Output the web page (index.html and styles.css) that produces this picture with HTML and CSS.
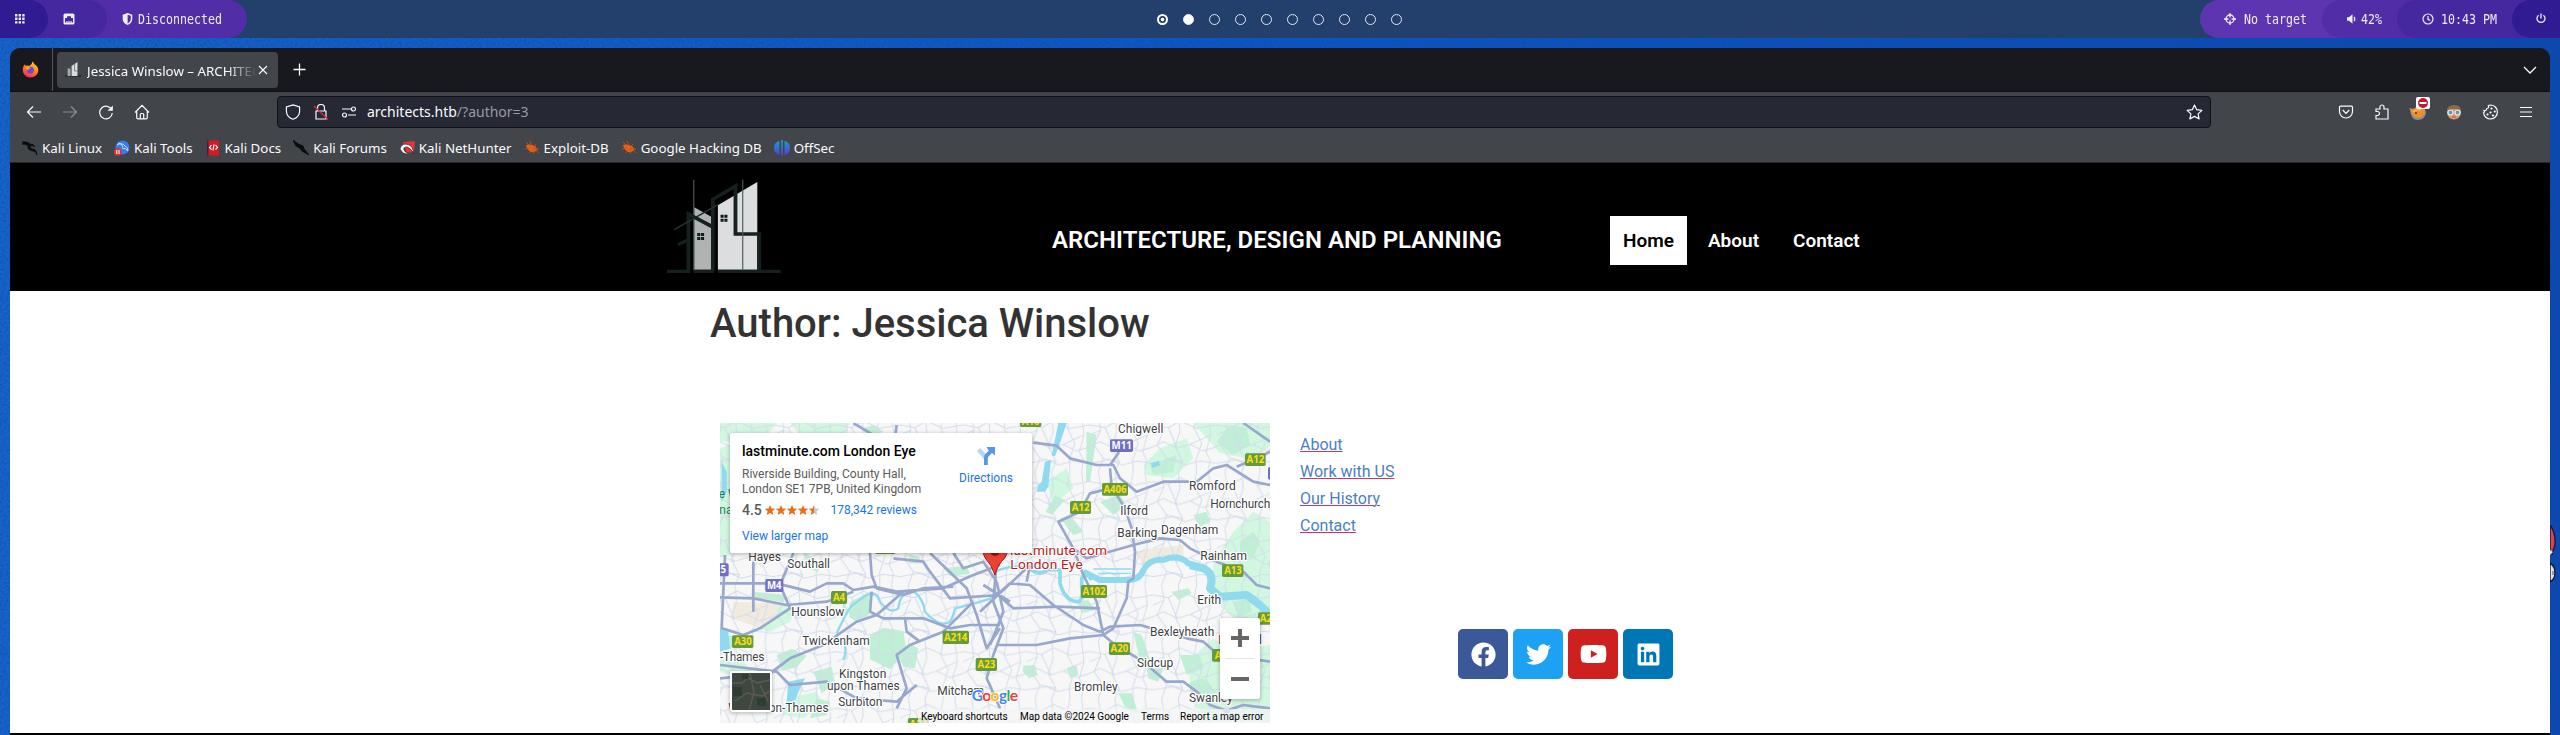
FILE: index.html
```html
<!DOCTYPE html>
<html lang="en">
<head>
<meta charset="utf-8">
<title>Jessica Winslow – ARCHITECTURE</title>
<link rel="stylesheet" href="styles.css">
</head>
<body>
<div class="desktop">
  <svg class="grain" width="2560" height="735"><filter id="noise" x="0" y="0" width="100%" height="100%"><feTurbulence type="fractalNoise" baseFrequency=".45" numOctaves="2"/><feColorMatrix values="0 0 0 0 0  0 0 0 0 .1  0 0 0 0 .3  1.600 0 0 0 -.6"/></filter><rect width="2560" height="735" filter="url(#noise)"/></svg>
  <div class="panel">
    <div class="panel-left">
      <div class="seg seg-apps"><svg width="10" height="10" viewBox="0 0 10 10" fill="#eee"><path d="M0 0h2.400v2.400H0zM3.600 0H6v2.400H3.600zM7.200 0h2.400v2.400H7.200zM0 3.600h2.400V6H0zM3.600 3.600H6V6H3.600zM7.200 3.600h2.400V6H7.200zM0 7.200h2.400v2.400H0zM3.600 7.200H6v2.400H3.600zM7.200 7.200h2.400v2.400H7.200z"/></svg></div>
      <div class="seg seg-net"><svg width="12" height="12" viewBox="0 0 12 12"><rect x=".5" y=".5" width="11" height="11" rx="1.500" fill="#eee"/><path d="M2 9.500V5h2V3.300h4V5h2v4.500H8.600V8H7.500v1.500H6.500V8H5.500v1.500H4.500V8H3.400v1.500z" fill="#4527a0"/></svg></div>
      <div class="seg seg-vpn"><svg width="11" height="12" viewBox="0 0 11 12"><path d="M5.500 0 10.300 1.700V6c0 3-2 5-4.800 6C2.700 11 .7 9 .7 6V1.700z" fill="#eee"/><path d="M5.600 1.700 8.800 2.700V6c0 2-1.200 3.500-3.200 4.400z" fill="#512da8"/></svg><span class="mono">Disconnected</span></div>
    </div>
    <div class="workspaces">
      <i class="dot target"></i><i class="dot full"></i><i class="dot"></i><i class="dot"></i><i class="dot"></i><i class="dot"></i><i class="dot"></i><i class="dot"></i><i class="dot"></i><i class="dot"></i>
    </div>
    <div class="panel-right">
      <div class="seg seg-target"><svg width="12" height="12" viewBox="0 0 12 12" fill="none" stroke="#eee" stroke-width="1.300"><circle cx="6" cy="6" r="4"/><path d="M6 0v4.500M6 7.500V12M0 6h4.500M7.500 6H12"/></svg><span class="mono">No target</span></div>
      <div class="seg seg-vol"><svg width="9" height="10" viewBox="0 0 9 10"><path d="M0 3.200h2L5.500.3v9.400L2 6.800H0z" fill="#eee"/><path d="M7 3q1.500 2 0 4" stroke="#eee" stroke-width="1.300" fill="none"/></svg><span class="mono">42%</span></div>
      <div class="seg seg-time"><svg width="12" height="12" viewBox="0 0 12 12" fill="none" stroke="#eee" stroke-width="1.200"><circle cx="6" cy="6" r="5"/><path d="M6 3v3.300l2.200 1.300"/></svg><span class="mono">10:43 PM</span></div>
      <div class="seg seg-power"><svg width="10" height="11" viewBox="0 0 10 11" fill="none" stroke="#eee" stroke-width="1.300"><path d="M2.600 2.200a4 4 0 1 0 4.800 0M5 .5v5"/></svg></div>
    </div>
  </div>

  <svg class="sticker" viewBox="0 0 10 64"><path d="M0 0q6 8 5 20l-3 9-2-3z" fill="#d94358" stroke="#1b1b3c" stroke-width="1.500"/><path d="M0 25l3 2-3 3z" fill="#dfe6f4"/><path d="M0 38q5 3 5 10 0 6-5 9z" fill="#dfe6f4" stroke="#1b1b3c" stroke-width="1.500"/><path d="M3 46v4" stroke="#555"/></svg>

  <div class="window">
    <div class="tabbar">
      <div class="ff"><svg width="17" height="17" viewBox="0 0 17 17"><defs><linearGradient id="ffg" x1=".8" y1="0" x2=".3" y2="1"><stop offset="0" stop-color="#ffe226"/><stop offset=".45" stop-color="#ff8a16"/><stop offset="1" stop-color="#f3265e"/></linearGradient></defs><path d="M10.500.5c1 1.200 1.400 2 2 2.800C15 5 16.500 7 16.300 9.500 16 13.500 12.700 16.500 8.500 16.500S.7 13 .7 9c0-2.300.8-4.300 2.300-5.800L3.600 5C5 4.300 6 4.500 7 5c1-.3 2.800-1.500 3.500-4.500z" fill="url(#ffg)"/><circle cx="8.400" cy="9.200" r="3.400" fill="#7a3fe0"/><path d="M3.500 6.500c2-1.500 4-.8 5.500.7-1.500 0-2.500.8-3 2-1-.5-2-1.500-2.500-2.700z" fill="#ffa51e"/></svg></div>
      <div class="tab"><svg width="16" height="15" viewBox="0 0 16 15"><path d="M0 14h16" stroke="#24282b" stroke-width="1.500"/><path d="M3 6l2.500 1.500V14H3z" fill="#aaa"/><path d="M6.500 4 12.500 0v14h-6z" fill="#d9dadc"/><path d="M2.500 14V6M6 14V4M9.500 2v7H13" fill="none" stroke="#6d7275" stroke-width=".8"/></svg><span class="tab-title">Jessica Winslow – ARCHITECTURE</span><svg class="close" width="10" height="10" viewBox="0 0 10 10" stroke="#fbfbfe" stroke-width="1.100"><path d="M1 1l8 8M9 1 1 9"/></svg></div>
      <svg class="plus" width="13" height="13" viewBox="0 0 13 13" stroke="#fbfbfe" stroke-width="1.300"><path d="M6.500.5v12M.5 6.500h12"/></svg>
      <svg class="chev" width="14" height="8" viewBox="0 0 14 8" fill="none" stroke="#fbfbfe" stroke-width="1.300"><path d="M1 1l6 6 6-6"/></svg>
    </div>
    <div class="navbar">
      <div class="nav-btns">
        <svg width="16" height="16" viewBox="0 0 16 16"><path d="M15 8H1.500M7 2.500 1.500 8 7 13.500"/></svg>
        <svg class="dim" width="16" height="16" viewBox="0 0 16 16"><path d="M1 8h13.500M9 2.500 14.500 8 9 13.500"/></svg>
        <svg width="16" height="16" viewBox="0 0 16 16"><path d="M13.800 6A6.300 6.300 0 1 0 14.300 9"/><path d="M14.800 1.500v5.300H9.500z" fill="#fbfbfe" stroke="none"/></svg>
        <svg width="16" height="16" viewBox="0 0 16 16"><path d="M1 8.500 8 1.300l7 7.200M2.700 7v6.500q0 1.300 1.300 1.300h8q1.300 0 1.300-1.300V7M6.300 14.500v-4q0-1 1-1h1.400q1 0 1 1v4"/></svg>
      </div>
      <div class="urlbar">
        <svg width="16" height="16" viewBox="0 0 16 16"><path d="M8 .9 14.600 3v4c0 4-2.600 6.900-6.600 8.300C4 13.900 1.400 11 1.400 7V3z"/></svg>
        <svg width="16" height="16" viewBox="0 0 16 16"><path d="M4.500 7V4a3.500 3.500 0 0 1 7 0v3M3 7h10v8H3z"/><path d="M1 2l14 13.500" stroke="#e22850"/></svg>
        <svg width="16" height="16" viewBox="0 0 16 16"><path d="M1 5h9M7 11h8"/><circle cx="12.500" cy="5" r="2"/><circle cx="3.500" cy="11" r="2"/></svg>
        <span class="url"><b>architects.htb</b>/?author=3</span>
        <svg class="star" width="17" height="16" viewBox="0 0 17 16"><path d="M8.500 1l2.200 4.700 5.200.7-3.800 3.500 1 5-4.600-2.500-4.600 2.500 1-5L1.100 6.400l5.200-.7z" stroke-linejoin="round"/></svg>
      </div>
      <div class="tools">
        <svg width="16" height="16" viewBox="0 0 16 16"><path d="M2.500 2.200h11q1 0 1 1v4.300a6.500 6.500 0 0 1-13 0V3.200q0-1 1-1zM4.700 6 8 9.300 11.300 6"/></svg>
        <svg width="16" height="16" viewBox="0 0 16 16"><path d="M2 5h4V3a2 2 0 0 1 4 0v2h4v10H2v-3.500h1.500a2 2 0 0 0 0-4H2z"/></svg>
        <span class="fox"><svg width="18" height="18" viewBox="0 0 18 18"><path d="M1 7q7-1 10-3 4 0 6 5 0 7-8 8-7 0-8-10z" fill="#7f91a5" stroke="none"/><path d="M0 5l4 1 7-4 5 4q1 8-7 9-6-1-7-7z" fill="#ef8f28" stroke="none"/><path d="M4 9q3-3 8-2" stroke="#f7c475"/><circle cx="7" cy="10" r="1" fill="#33404c" stroke="none"/></svg><svg class="badge" width="14" height="12" viewBox="0 0 14 12"><rect width="14" height="12" rx="2" fill="#fff" stroke="none"/><circle cx="7" cy="6" r="5" fill="#c5162e" stroke="none"/><path class="minus" d="M3.500 6h7"/></svg></span>
        <svg width="16" height="16" viewBox="0 0 16 16"><circle cx="8" cy="8.500" r="7" fill="#d79a76" stroke="none"/><path d="M.8 7Q1 1 8 1t7.200 6q-4-2-7.200-2T.8 7z" fill="#8d6b42" stroke="none"/><circle cx="4.500" cy="8.500" r="2.500" fill="#5f9bab" stroke="#e8ecee"/><circle cx="11.500" cy="8.500" r="2.500" fill="#5f9bab" stroke="#e8ecee"/><path d="M6 13h4" stroke="#b45645"/></svg>
        <svg width="17" height="16" viewBox="0 0 17 16"><path d="M9 1a7 7 0 1 1-7.500 8Q3 8 2 6.500q2.500.5 2.800-2Q7.500 4 6.300 1.500 7.500 1 9 1z"/><g fill="#fbfbfe" stroke="none"><circle cx="9.500" cy="4.500" r="1.100"/><circle cx="12.800" cy="7.500" r="1.100"/><circle cx="8.500" cy="8.500" r="1.100"/><circle cx="5.500" cy="10.500" r="1.100"/><circle cx="11" cy="11.500" r="1.100"/></g></svg>
        <svg width="14" height="14" viewBox="0 0 14 14"><path d="M1 2.500h12M1 7h12M1 11.500h12"/></svg>
      </div>
    </div>
    <div class="bookmarks">
      <span><svg viewBox="0 0 16 16"><path d="M0 2q6-1 8 2 4 0 5 3-2-2-5-1-1 2 3 3 4 1 4 6-1-4-4-4-6-1-5-5Q4 4 0 4l3-1z" fill="#0b0c0d" stroke="#0b0c0d" stroke-width=".7"/></svg>Kali Linux</span>
      <span><svg viewBox="0 0 16 16"><circle cx="8.500" cy="7.500" r="7" fill="#367bf0"/><path d="M3 5q5-3 8 1 3 1 3 5-2-3-6-3M4 3q4 0 5 4" fill="none" stroke="#cfe0ff"/><circle cx="3.800" cy="12" r="3.800" fill="#e43232"/><path d="M2.800 10v4M5 10v4" stroke="#fff"/></svg>Kali Tools</span>
      <span><svg viewBox="0 0 16 16"><path d="M2 .5h12v15H2z" fill="#d71920"/><path d="M2 .5h1.500v15H2z" fill="#4b1a40"/><path d="M6.500 5 4.500 7.500l2 2M10.500 5l2 2.500-2 2M9 4.500l-1 6" fill="none" stroke="#fff" stroke-width="1.200"/></svg>Kali Docs</span>
      <span><svg viewBox="0 0 16 16"><path d="M0 0l5 4 5 2 1 3 5 6-7-4-2-3-4-2z" fill="#0b0c0d" stroke="#0b0c0d"/></svg>Kali Forums</span>
      <span><svg viewBox="0 0 16 16"><path d="M4 2 16 1l-1 10-7 3z" fill="#e8323c"/><path d="M1 9q1-5 6-5 6 1 7 6l1 4q-3-6-7-7-4 0-3 3 1 3 5 3-5 3-9-4z" fill="#fff" stroke="#282828" stroke-width=".7"/></svg>Kali NetHunter</span>
      <span><svg viewBox="0 0 16 16"><path d="M2 5q3-1 6 0 5 1 5 5-3 3-6 2Q3 10 2 5z" fill="#ee6011"/><path d="M2 2l4 4M6 1l2 5M1 9l5-1M5 13l3-4M10 14l-1-5M15 13l-5-5M12 4l-3 4M15 9H8" stroke="#c4581c" stroke-width=".8"/></svg>Exploit-DB</span>
      <span><svg viewBox="0 0 16 16"><path d="M2 5q3-1 6 0 5 1 5 5-3 3-6 2Q3 10 2 5z" fill="#ee6011"/><path d="M2 2l4 4M6 1l2 5M1 9l5-1M5 13l3-4M10 14l-1-5M15 13l-5-5M12 4l-3 4M15 9H8" stroke="#c4581c" stroke-width=".8"/></svg>Google Hacking DB</span>
      <span><svg viewBox="0 0 16 16"><defs><linearGradient id="og" x1="0" y1="0" x2="0" y2="1"><stop offset="0" stop-color="#12a5c4"/><stop offset="1" stop-color="#5a35d6"/></linearGradient></defs><path d="M5.500 1v14A7.200 7.200 0 0 1 5.500 1zM10.500 1v14a7.200 7.200 0 0 0 0-14zM7.100 0h1.800v16H7.100z" fill="url(#og)"/></svg>OffSec</span>
    </div>

    <div class="page">
      <header class="site-head">
        <svg class="logo" viewBox="71 43 298 285" preserveAspectRatio="none"><path d="M142 128 188 157V315H142z" fill="#b1b3b3"/><path d="M204 122 307 52V315H204z" fill="#dcdddf"/><g fill="none" stroke="#15201f" stroke-width="10"><path d="M71 320H132M140 320H193M204 320H368M127 315V148L188 186M191 320V104L250 64V208H312V318M100 240 127 225"/></g><path d="M141 45V315M269 45V315" stroke="#4a5b5b" stroke-width="3"/><path d="M90 195 204 120" stroke="#25302f" stroke-width="4"/><path d="M127 148 188 184" stroke="#15201f" stroke-width="9"/><path d="M211 150h8v9h-8zM221 150h8v9h-8zM211 162h8v9h-8zM221 162h8v9h-8zM150 205h8v9h-8zM160 205h8v9h-8zM150 217h8v9h-8zM160 217h8v9h-8z" fill="#10191b"/></svg>
        <h2 class="tagline">ARCHITECTURE, DESIGN AND PLANNING</h2>
        <nav class="menu"><a class="on">Home</a><a>About</a><a>Contact</a></nav>
      </header>
      <h1>Author: Jessica Winslow</h1>
      <div class="cols">
        <div class="map">
          <svg class="map-art" width="550" height="300" viewBox="30 24 1650 900">
            <defs><pattern id="streets" width="190" height="170" patternUnits="userSpaceOnUse"><g fill="none" stroke="#d3dcea" stroke-width="3"><path d="M0 30 45 38 80 18 130 40 190 30M0 95 30 80 72 100 110 88 150 108 190 95M0 145 60 135 95 150 140 138 190 145M25 0 32 45 12 90 40 130 25 170M75 0 80 50 65 95 88 140 75 170M130 0 122 40 145 85 128 135 130 170M165 0 172 60 158 110 170 135 165 170M45 38 72 100M110 88 172 60M32 45 0 60M88 140 40 130"/></g></pattern></defs>
            <rect x="30" y="24" width="1650" height="900" fill="#f8f7f7"/>
            <g fill="#d1f7e0"><path d="M30 24h170l-30 40-60 20-80-5zM30 100l30-10v330l-30 10zM240 24h180l-20 35H270zM1300 150l50-50 80-30 20 60-60 60-80-10zM1450 24h230v70l-50 40-100-20zM1510 440l60-90 60-60 50 30v300l-80 20-90-90zM1430 740l80-70 60 40 110-20v230h-210l-20-80zM1010 200l60-40 20 60-60 50zM640 360h60l-30 40zM30 730l70 10 40 40-60 10-50-20zM200 560l60 20-20 40-60 30-40-10zM230 850l90-20 20 40-60 40-60-10z"/></g>
            <g fill="#bfefd5"><path d="M480 660l40-22 60 10 10 60-50 55-60-30zM420 560l60-30 5 60-40 35-28-20zM700 460l70-8 10 25-60 5zM565 720l40-30 20 10-10 60-35-5zM200 720l45-18 45 20-30 35-45 10zM310 770l55-15 10 50-40 30zM130 530l100 10-10 20-80-10zM320 850l40 10-10 40-50 10zM1520 80l40-50 50 10 10 50-50 30zM1320 150l80-30-10 50-60 10zM1570 560l50-10 5 40-40 20zM1035 240l30 15-40 45-18-10zM1130 50l30 10-20 140-12 0zM1170 260l60-20 20 30-40 30zM1050 310l30-10 40 50-30 10zM1270 650l25 10 30 90-30 10zM940 752l35-2 8 30-25 10-20-20zM1070 760l30-10 5 30-25 10zM1225 835l40 0 20 60-40-20zM1410 720l60 0 10 40-50 20zM1310 760l50 0-15 40-30-10zM1100 560l35-5 20 30-40 10zM1385 530l50-10 10 15-40 20zM280 410l45 30 0 30-35-10zM460 40l30-10 30 20-40 15zM60 660l30 20-40 30-20-10zM600 420l30 5-5 20-30 0zM400 560l15 25-20 10zM1450 300l40-10 10 30-30 15zM1590 380l40-30 20 30-20 50-40-10zM1440 800l40-10 40 40-30 20-50-20z"/></g>
            <path d="M70 560 205 565 200 600 150 640 65 610zM1275 410 1330 400 1420 390 1420 430 1300 450z" fill="#f1ebdf"/>
            <rect x="30" y="24" width="1650" height="900" fill="url(#streets)"/>
            <g fill="#8fdaf0"><path d="M1045 24h25l-20 60-15 40-10-3zM1005 140l18-5-8 80-10 15-25 0 5-20 10-10zM35 140l15 30 0 60-15 30zM30 640l25 10 5 50-30 10zM235 800l50-10-15 30-20 50-20-10zM1322 145l25-8 3 14-23 8z"/></g>
            <g fill="none" stroke="#90daee" stroke-linejoin="round"><path stroke-width="7" d="M400 735Q415 700 395 670M380 655Q410 590 425 572L470 540Q500 525 510 560 540 600 565 580 570 530 610 528 640 550 645 590 690 640 720 620 730 605 735 580 800 565 850 548 862 500 855 470 910 445 960 462"/><path stroke-width="11" d="M960 462Q990 485 1015 463L1050 465V505Q1065 560 1105 560 1120 555 1115 520V490Q1130 470 1145 495"/><path stroke-width="18" d="M1120 470 1170 495H1255q35 0 45-30 20-35 60-30 45-20 75 10l45 15q35 15 20 60l30 25 80-5 40 30 20 20"/><path stroke-width="24" d="M1440 450 1480 460q35 15 20 60l30 25 80-5 40 30 30 30"/><path stroke-width="4" d="M1150 462H1265M1165 475H1262"/></g>
            <g fill="none" stroke="#98a8cd" stroke-width="8" stroke-linejoin="round"><path d="M30 505H200L300 530 350 505H400L430 525 490 515 560 530 700 520 790 480 870 450M30 547 130 550 230 570 350 560 430 530M130 440V590M45 420 35 640 100 660 150 640 240 580 210 510 250 415M480 414 485 480 500 520 580 540 640 520 730 515M485 530 480 590 520 610 640 610 720 640 780 630 870 630M30 790 180 775 240 730 340 690 440 620 500 600 580 530M550 430 640 440 660 470 720 550 870 540M660 414 770 520 800 600 830 700 870 640M560 880 590 820 560 720 600 690 700 650 790 560M30 750 200 770 240 810 350 800 440 850 560 860 620 810M585 610 590 650 630 680M860 440 850 560 880 640 850 720 830 790 870 880M730 414 760 460 820 440 860 500M560 30 555 70M430 24 490 60"/><path d="M970 83 1040 92 1080 130 1160 150 1210 150 1230 190 1280 230 1360 200 1460 200 1510 160 1550 150 1630 200 1680 210M1200 160 1205 215 1245 280 1265 340 1275 410 1270 490 1255 500 1250 550 1210 640 1180 660 1080 670 980 690 860 690M1220 215 1140 235 1110 290 1045 320 1090 400 1120 480 1160 560 1180 660 1240 710M1090 400 1130 430 1270 390 1350 370 1410 375 1440 400 1520 440 1600 470 1640 510 1680 520M870 545 910 580 1040 575 1170 580M850 550 900 505 960 510 1030 570 1120 630 1170 650 1200 635 1290 630 1430 670 1480 680 1520 715 1680 740M1250 710 1300 740 1370 800 1420 800 1460 830 1500 870 1560 890M1600 24 1680 80M1580 155 1640 130 1680 110M860 500 880 590 840 690M1200 150 1225 115 1225 95M1540 890 1600 870 1680 880M950 500 960 450M810 590 960 450M820 510 900 560"/></g>
            <g font-family="Roboto, sans-serif"><g fill="#3c4043" stroke="#fff" stroke-width="7" paint-order="stroke" stroke-linejoin="round" font-size="36"><text x="115" y="439" textLength="98">Hayes</text><text x="232" y="459" textLength="128">Southall</text><text x="244" y="603" textLength="159">Hounslow</text><text x="277" y="690" textLength="202">Twickenham</text><text x="30" y="738" textLength="133">-Thames</text><text x="387" y="789" textLength="142">Kingston</text><text x="351" y="825" textLength="218">upon Thames</text><text x="385" y="873" textLength="132">Surbiton</text><text x="682" y="840" textLength="140">Mitcham</text><text x="55" y="891" textLength="301">Walton-on-Thames</text><text x="1224" y="55" textLength="136">Chigwell</text><text x="1437" y="225" textLength="140">Romford</text><text x="1501" y="279" textLength="180">Hornchurch</text><text x="1231" y="300" textLength="83">Ilford</text><text x="1222" y="367" textLength="120">Barking</text><text x="1353" y="357" textLength="172">Dagenham</text><text x="1471" y="435" textLength="140">Rainham</text><text x="1462" y="567" textLength="71">Erith</text><text x="1320" y="663" textLength="193">Bexleyheath</text><text x="1281" y="756" textLength="109">Sidcup</text><text x="1092" y="828" textLength="131">Bromley</text><text x="1437" y="861" textLength="131">Swanley</text><text x="1525" y="686" textLength="130">Dartford</text></g>
            <g fill="#188056" font-size="36"><text x="26" y="250">e W</text><text x="28" y="297">nal</text></g>
            <g fill="#649b3c"><rect x="363" y="528" width="48" height="39" rx="5"/><rect x="66" y="661" width="64" height="38" rx="5"/><rect x="698" y="647" width="79" height="40" rx="5"/><rect x="797" y="729" width="64" height="39" rx="5"/><rect x="495" y="380" width="62" height="37" rx="5"/><rect x="594" y="909" width="62" height="37" rx="5"/><rect x="930" y="0" width="64" height="36" rx="5"/><rect x="1605" y="115" width="62" height="38" rx="5"/><rect x="1176" y="204" width="78" height="38" rx="5"/><rect x="1080" y="258" width="63" height="39" rx="5"/><rect x="1536" y="448" width="64" height="38" rx="5"/><rect x="1113" y="510" width="78" height="39" rx="5"/><rect x="1197" y="682" width="63" height="38" rx="5"/><rect x="1506" y="702" width="70" height="38" rx="5"/><rect x="1644" y="592" width="60" height="37" rx="5"/></g>
            <g fill="#706fc5"><rect x="166" y="492" width="54" height="39" rx="5"/><rect x="1200" y="73" width="69" height="38" rx="5"/><rect x="10" y="445" width="46" height="39" rx="5"/><rect x="1674" y="156" width="20" height="38" rx="5"/></g>
            <g font-family="Open Sans, sans-serif" font-weight="700" font-size="29" text-anchor="middle"><g fill="#fadf16"><text x="387" y="558">A4</text><text x="99" y="691">A30</text><text x="737" y="677">A214</text><text x="829" y="759">A23</text><text x="625" y="939">A24</text><text x="962" y="29">A10</text><text x="1636" y="145">A12</text><text x="1215" y="233">A406</text><text x="1112" y="288">A12</text><text x="1569" y="478">A13</text><text x="1152" y="540">A102</text><text x="1228" y="712">A20</text><text x="1541" y="732">A20</text><text x="1676" y="621">A20</text></g><g fill="#fff"><text x="193" y="522">M4</text><text x="1235" y="103">M11</text><text x="40" y="475">5</text></g></g>
            <path d="M855 480Q845 450 825 428 810 400 825 380H885Q902 400 885 428 862 450 855 480z" fill="#ea4335" stroke="#b31412" stroke-width="3"/><circle cx="855" cy="408" r="15" fill="#a50e0e"/>
            <g fill="#b8201d" stroke="#fff" stroke-width="6" paint-order="stroke" font-size="41"><text x="900" y="420" textLength="291">lastminute.com</text><text x="901" y="461" textLength="217">London Eye</text></g></g>
            <text x="785" y="859" font-family="Lato, sans-serif" font-size="47" font-weight="700" textLength="139" stroke="#fff" stroke-width="5" paint-order="stroke"><tspan fill="#4285f4">G</tspan><tspan fill="#ea4335">o</tspan><tspan fill="#fbbc04">o</tspan><tspan fill="#4285f4">g</tspan><tspan fill="#34a853">l</tspan><tspan fill="#ea4335">e</tspan></text>
          </svg>
          <div class="card">
            <div class="card-main">
              <strong>lastminute.com London Eye</strong>
              <p>Riverside Building, County Hall,<br>London SE1 7PB, United Kingdom</p>
              <div class="rating"><span class="score">4.5</span><svg width="55" height="11" viewBox="0 0 55 11"><defs><linearGradient id="half"><stop offset=".5" stop-color="#e7711b"/><stop offset=".5" stop-color="#c8c8c8"/></linearGradient></defs><g fill="#e7711b"><path id="st" d="M5 0l1.500 3.500 3.800.3-2.900 2.500.9 3.700L5 8 1.700 10l.9-3.700L-.3 3.800l3.800-.3z"/><use href="#st" x="11"/><use href="#st" x="22"/><use href="#st" x="33"/></g><path d="M49 0l1.500 3.500 3.800.3-2.900 2.500.9 3.700L49 8l-3.300 2 .9-3.700-2.900-2.500 3.800-.3z" fill="url(#half)"/></svg><a>178,342 reviews</a></div>
              <a class="larger">View larger map</a>
            </div>
            <div class="directions"><svg width="18" height="18" viewBox="0 0 18 18"><path d="M0 4 3 1l6 6v5H7z" fill="#b5d4fa"/><path d="M7 18v-7.500q0-2 1.500-3.500l3.200-3.200L9.500 0H18v8.500l-3-2.500-3.500 3.500q-.7.700-.7 2V18z" fill="#5896e6"/></svg><a>Directions</a></div>
          </div>
          <svg class="sat" width="42" height="41" viewBox="0 0 42 41"><rect width="42" height="41" rx="2" fill="#fff"/><path d="M2 2h38v37H2z" fill="#3f4840"/><path d="M2 12h10l6-5 9 5 13-3M5 30l12-8 15 3 8-5M20 2l4 20-5 17M30 14l8 16" stroke="#5b594f" stroke-width="1.500" fill="none"/><path d="M3 16h9v9H3zM27 27h9v8h-9zM12 3h6v5h-6z" fill="#2f3d31"/></svg>
          <div class="zoomer"><svg width="40" height="81" viewBox="0 0 40 81"><path d="M20 11v18M11 20h18M11 61h18" stroke="#666" stroke-width="4"/><path d="M5 40.500h30" stroke="#e6e6e6"/></svg></div>
          <div class="legal"><span class="l1">Keyboard shortcuts</span><span class="l2">Map data ©2024 Google</span><span class="l3">Terms</span><span class="l4">Report a map error</span></div>
        </div>
        <div class="links"><a>About</a><a>Work with US</a><a>Our History</a><a>Contact</a></div>
        <div class="social">
          <span class="fb"><svg width="25" height="25" viewBox="0 0 512 512"><path fill="#fff" d="M504 256C504 119 393 8 256 8S8 119 8 256c0 123.780 90.690 226.380 209.250 245V327.690h-63V256h63v-54.640c0-62.150 37-96.480 93.670-96.480 27.140 0 55.520 4.840 55.520 4.840v61h-31.280c-30.800 0-40.410 19.120-40.410 38.730V256h68.780l-11 71.690h-57.780V501C413.310 482.380 504 379.780 504 256z"/></svg></span>
          <span class="tw"><svg width="25" height="25" viewBox="0 0 512 512"><path fill="#fff" d="M459.370 151.716c.325 4.548.325 9.097.325 13.645 0 138.720-105.583 298.558-298.558 298.558-59.452 0-114.680-17.219-161.137-47.106 8.447.974 16.568 1.299 25.340 1.299 49.055 0 94.213-16.568 130.274-44.832-46.132-.975-84.792-31.188-98.112-72.772 6.498.974 12.995 1.624 19.818 1.624 9.421 0 18.843-1.300 27.614-3.573-48.081-9.747-84.143-51.980-84.143-102.985v-1.299c13.969 7.797 30.214 12.670 47.431 13.319-28.264-18.843-46.781-51.005-46.781-87.391 0-19.492 5.197-37.360 14.294-52.954 51.655 63.675 129.300 105.258 216.365 109.807-1.624-7.797-2.599-15.918-2.599-24.040 0-57.828 46.782-104.934 104.934-104.934 30.213 0 57.502 12.670 76.670 33.137 23.715-4.548 46.456-13.320 66.599-25.340-7.798 24.366-24.366 44.833-46.132 57.827 21.117-2.273 41.584-8.122 60.426-16.243-14.292 20.791-32.161 39.308-52.628 54.253z"/></svg></span>
          <span class="yt"><svg width="27" height="24" viewBox="0 0 576 512"><path fill="#fff" d="M549.655 124.083c-6.281-23.650-24.787-42.276-48.284-48.597C458.781 64 288 64 288 64S117.220 64 74.629 75.486c-23.497 6.322-42.003 24.947-48.284 48.597-11.412 42.867-11.412 132.305-11.412 132.305s0 89.438 11.412 132.305c6.281 23.650 24.787 41.500 48.284 47.821C117.220 448 288 448 288 448s170.780 0 213.371-11.486c23.497-6.321 42.003-24.171 48.284-47.821 11.412-42.867 11.412-132.305 11.412-132.305s0-89.438-11.412-132.305zm-317.510 213.508V175.185l142.739 81.205-142.739 81.201z"/></svg></span>
          <span class="li"><svg width="23" height="25" viewBox="0 0 448 512"><path fill="#fff" d="M416 32H31.900C14.300 32 0 46.500 0 64.300v383.400C0 465.500 14.300 480 31.900 480H416c17.600 0 32-14.500 32-32.300V64.300c0-17.800-14.400-32.300-32-32.300zM135.400 416H69V202.200h66.500V416zm-33.200-243c-21.300 0-38.500-17.300-38.500-38.500S80.900 96 102.200 96c21.200 0 38.500 17.300 38.500 38.500 0 21.300-17.200 38.500-38.500 38.500zm282.100 243h-66.400V312c0-24.800-.5-56.700-34.500-56.700-34.600 0-39.900 27-39.900 54.900V416h-66.400V202.200h63.700v29.200h.9c8.900-16.800 30.600-34.500 62.900-34.500 67.200 0 79.700 44.300 79.700 101.900V416z"/></svg></span>
        </div>
      </div>
    </div>
  </div>
</div>
</body>
</html>
```
FILE: styles.css
```css
* { box-sizing: border-box; }
body { margin: 0; font-family: Roboto, sans-serif; }
.desktop { position: relative; width: 2560px; height: 735px; overflow: hidden; background: linear-gradient(90deg, #1a60d0, #0f52cc 50%, #1044b4); }
.grain { position: absolute; left: 0; top: 0; }
.panel { display: flex; justify-content: space-between; height: 38px; background: rgba(36, 62, 104, .96); position: relative; }
.panel-left, .panel-right { display: flex; }
.seg { height: 37.500px; display: flex; align-items: center; }
.panel-left .seg { border-radius: 0 19px 19px 0; position: relative; }
.panel-left .seg + .seg { margin-left: -19px; padding-left: 34px; }
.panel-right .seg { border-radius: 19px 0 0 19px; }
.panel-right .seg + .seg { margin-left: -19px; }
.seg-apps { width: 48px; padding-left: 15px; background: #311b92; z-index: 3; }
.seg-net { width: 78px; background: #4527a0; z-index: 2; }
.seg-vpn { width: 159px; background: #512da8; z-index: 1; }
.seg-vpn .mono { margin-left: 5px; }
.seg-target { width: 141px; padding-left: 24px; background: #5e35b1; }
.seg-target .mono { margin-left: 8px; }
.seg-vol { width: 94px; padding-left: 25px; background: #512da8; }
.seg-vol .mono { margin-left: 5px; }
.seg-time { width: 134px; padding-left: 25px; background: #4527a0; }
.seg-time .mono { margin-left: 7px; }
.seg-power { width: 48px; padding-left: 24px; background: #311b92; }
.mono { font: 14px/20px "DejaVu Sans Mono", monospace; color: #eee; transform: scaleX(.83); transform-origin: 0 50%; white-space: pre; }
.workspaces { position: absolute; left: 1157px; top: 14px; display: flex; gap: 15px; }
.dot { width: 11px; height: 11px; border: 1px solid #e4e8f0; border-radius: 50%; }
.dot.full { background: #fff; }
.dot.target { border: 2px solid #fff; background: radial-gradient(circle, #fff 0 1.500px, transparent 2.200px); }
.sticker { position: absolute; left: 2550px; top: 525px; width: 10px; height: 64px; }

.window { position: relative; margin: 10px 10px 0; height: 687px; border-radius: 10px 10px 0 0; overflow: hidden; background: #42454a; }
.tabbar { height: 44px; background: #18191e; border-bottom: 1px solid #0c0d0f; display: flex; align-items: center; }
.ff { width: 43px; height: 43px; border-right: 1px solid #55565b; display: flex; align-items: center; padding-left: 12px; }
.tab { margin-left: 4px; width: 221px; height: 36px; border-radius: 4px; background: #42454b; display: flex; align-items: center; padding-left: 8px; }
.tab-title { margin-left: 6px; width: 168px; overflow: hidden; white-space: nowrap; font: 13.330px/20px "Noto Sans", sans-serif; color: #fbfbfe; -webkit-mask-image: linear-gradient(90deg, #000 140px, transparent 170px); mask-image: linear-gradient(90deg, #000 140px, transparent 170px); margin-top: 2px; }
.close { margin-left: 3px; }
.plus { margin-left: 15px; }
.chev { margin-left: auto; margin-right: 13px; }
.navbar { height: 40px; display: flex; align-items: center; }
.navbar svg { fill: none; stroke: #fbfbfe; stroke-width: 1.200; }
.nav-btns { width: 267px; padding-left: 16px; display: flex; gap: 20px; }
.nav-btns .dim { opacity: .4; }
.urlbar { width: 1934px; height: 32px; border: 1px solid #101115; border-radius: 4px; background: #262833; display: flex; align-items: center; padding: 0 7px; gap: 12px; }
.url { font: 14px/20px "Noto Sans", sans-serif; color: #9a9ba3; margin-left: -2px; margin-top: -1px; }
.url b { font-weight: 400; color: #fbfbfe; }
.star { margin-left: auto; }
.tools { margin-left: auto; padding-right: 17px; display: flex; gap: 20px; align-items: center; }
.fox { position: relative; display: flex; margin: 0 -1px; }
.badge { position: absolute; left: 7px; top: -6px; }
.badge .minus { stroke: #fff; stroke-width: 2; }
.bookmarks { display: flex; gap: 12px; padding: 2px 0 0 12px; align-items: center; font: 13.330px/20px "Noto Sans", sans-serif; color: #fbfbfe; border-bottom: 1px solid #26272b; height: 31px; }
.bookmarks span { display: flex; align-items: center; gap: 4px; white-space: nowrap; }
.bookmarks svg { width: 16px; height: 16px; }

.page { height: 572px; background: #fff; border-bottom: 2px solid #000; }
.site-head { height: 128px; background: #000; display: flex; }
.logo { width: 114px; height: 95px; margin: 16px 0 0 657px; }
.tagline { margin: 63px 0 0 271px; width: 450px; font-size: 24px; line-height: 28px; font-weight: 600; color: #fff; white-space: nowrap; letter-spacing: .04px; }
.menu { margin: 53px 0 0 108px; display: flex; gap: 8px; height: 49px; }
.menu a { padding: 0 13px; font-size: 19px; line-height: 50px; font-weight: 600; color: #fff; }
.menu .on { background: #fff; color: #000; }
h1 { margin: 0 0 0 700px; height: 132px; padding-top: 9px; font-size: 40px; line-height: 48px; font-weight: 500; color: #333; }
.cols { display: flex; padding-left: 710px; }
.map { position: relative; width: 550px; height: 300px; overflow: hidden; }
.map-art { display: block; }
.card { position: absolute; left: 10px; top: 10px; width: 302px; height: 120px; background: #fff; border-radius: 2px; box-shadow: 0 1px 4px rgba(0,0,0,.3); display: flex; justify-content: space-between; padding: 9px 19px 0 12px; font-size: 12px; color: #5b5b5b; }
.card strong { display: block; font-size: 14px; line-height: 18px; font-weight: 500; color: #000; white-space: nowrap; }
.card p { margin: 7px 0 0; line-height: 15px; white-space: nowrap; }
.card a { color: #1a73e8; }
.rating { display: flex; align-items: center; height: 20px; margin-top: 3px; }
.score { font-size: 14px; font-weight: 500; width: 23px; }
.rating a { margin-left: 10.500px; }
.larger { display: block; margin-top: 9px; line-height: 15px; }
.directions { display: flex; flex-direction: column; align-items: center; padding-top: 5px; gap: 6px; }
.sat { position: absolute; left: 10px; top: 248px; box-shadow: 0 1px 4px rgba(0,0,0,.3); }
.zoomer { position: absolute; left: 500px; top: 195px; width: 40px; height: 81px; background: #fff; border-radius: 2px; box-shadow: 0 1px 4px rgba(0,0,0,.3); }
.legal { position: absolute; left: 198px; right: 0; bottom: 0; height: 14px; padding-left: 3px; background: rgba(245,245,245,.7); display: flex; font-size: 10px; line-height: 16px; color: #000; white-space: nowrap; }
.l1 { width: 99px; }
.l2 { width: 121px; }
.l3 { width: 39px; }
.links { margin: 8px 0 0 30px; width: 158px; display: flex; flex-direction: column; align-items: flex-start; }
.links a { font-size: 16px; line-height: 27px; color: #4a7fc4; text-decoration: underline 1px #cc3366; }
.social { margin-top: 206px; display: flex; gap: 5px; height: 50px; }
.social span { width: 50px; height: 50px; border-radius: 5px; display: flex; align-items: center; justify-content: center; }
.fb { background: #3b5998; }
.tw { background: #1da1f2; }
.yt { background: #cd201f; }
.li { background: #0077b5; }
```
